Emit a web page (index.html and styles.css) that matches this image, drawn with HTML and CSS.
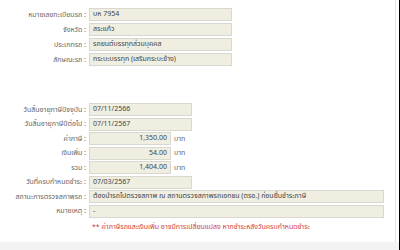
FILE: index.html
```html
<!DOCTYPE html>
<html lang="th">
<head>
  <meta charset="UTF-8" />
  <title>ข้อมูลภาษีรถ</title>
  <link rel="stylesheet" href="styles.css">
</head>
<body>
<div class="painel">

  <div class="bloco topo">
    <div class="linha">
      <span class="rotulo">หมายเลขทะเบียนรถ :</span>
      <span class="campo w-topo">บห 7954</span>
    </div>
    <div class="linha">
      <span class="rotulo">จังหวัด :</span>
      <span class="campo w-topo">สระแก้ว</span>
    </div>
    <div class="linha">
      <span class="rotulo">ประเภทรถ :</span>
      <span class="campo w-topo">รถยนต์บรรทุกส่วนบุคคล</span>
    </div>
    <div class="linha">
      <span class="rotulo">ลักษณะรถ :</span>
      <span class="campo w-topo">กระบะบรรทุก (เสริมกระบะข้าง)</span>
    </div>
  </div>

  <div class="bloco imposto">
    <div class="linha">
      <span class="rotulo">วันสิ้นอายุภาษีปัจจุบัน :</span>
      <span class="campo w-data">07/11/2566</span>
    </div>
    <div class="linha">
      <span class="rotulo">วันสิ้นอายุภาษีปีต่อไป :</span>
      <span class="campo w-data">07/11/2567</span>
    </div>
    <div class="linha">
      <span class="rotulo">ค่าภาษี :</span>
      <span class="campo w-valor">1,350.00</span>
      <span class="unidade">บาท</span>
    </div>
    <div class="linha">
      <span class="rotulo">เงินเพิ่ม :</span>
      <span class="campo w-valor">54.00</span>
      <span class="unidade">บาท</span>
    </div>
    <div class="linha">
      <span class="rotulo">รวม :</span>
      <span class="campo w-valor">1,404.00</span>
      <span class="unidade">บาท</span>
    </div>
    <div class="linha">
      <span class="rotulo">วันที่ครบกำหนดชำระ :</span>
      <span class="campo w-data">07/03/2567</span>
    </div>
    <div class="linha">
      <span class="rotulo">สถานะการตรวจสภาพรถ :</span>
      <span class="campo w-largo">ต้องนำรถไปตรวจสภาพ ณ สถานตรวจสภาพรถเอกชน (ตรอ.) ก่อนยื่นชำระภาษี</span>
    </div>
    <div class="linha">
      <span class="rotulo">หมายเหตุ :</span>
      <span class="campo w-largo">-</span>
    </div>
    <p class="aviso">** ค่าภาษีรถและเงินเพิ่ม อาจมีการเปลี่ยนแปลง หากชำระหลังวันครบกำหนดชำระ</p>
  </div>

</div>
<div class="rodape"></div>
</body>
</html>
```

FILE: styles.css
```css
html, body {
  margin: 0;
  padding: 0;
}
body {
  width: 400px;
  height: 250px;
  box-sizing: border-box;
  border-right: 1px solid #000;
  background-color: #fff;
  font-family: Tahoma, "Noto Sans Thai", "DejaVu Sans", sans-serif;
  font-size: 7px;
  color: #444;
  overflow: hidden;
}
.painel {
  width: 396px;
  height: 242px;
  box-sizing: border-box;
  border-right: 1px solid #e2e2e2;
  padding-top: 8px;
}
.rodape {
  height: 8px;
  width: 399px;
  background-color: #f3f3f3;
}
.bloco .linha {
  display: flex;
  align-items: center;
  height: 13px;
}
.topo .linha {
  margin-bottom: 2px;
}
.imposto {
  margin-top: 37px;
}
.imposto .linha {
  margin-bottom: 1.5px;
}
.rotulo {
  width: 86px;
  padding-right: 3px;
  text-align: right;
  color: #666;
  white-space: nowrap;
}
.campo {
  height: 13px;
  box-sizing: border-box;
  background-color: #efeee1;
  border: 1px solid #d8d8d0;
  padding: 0 3px;
  line-height: 11px;
  color: #444;
  white-space: nowrap;
  overflow: hidden;
}
.w-topo {
  width: 143px;
}
.w-data {
  width: 103px;
}
.w-valor {
  width: 82px;
  text-align: right;
}
.w-largo {
  width: 295px;
}
.unidade {
  margin-left: 3px;
  color: #666;
}
.aviso {
  margin: 4px 0 0 92px;
  color: #d04040;
  line-height: 10px;
}
```
